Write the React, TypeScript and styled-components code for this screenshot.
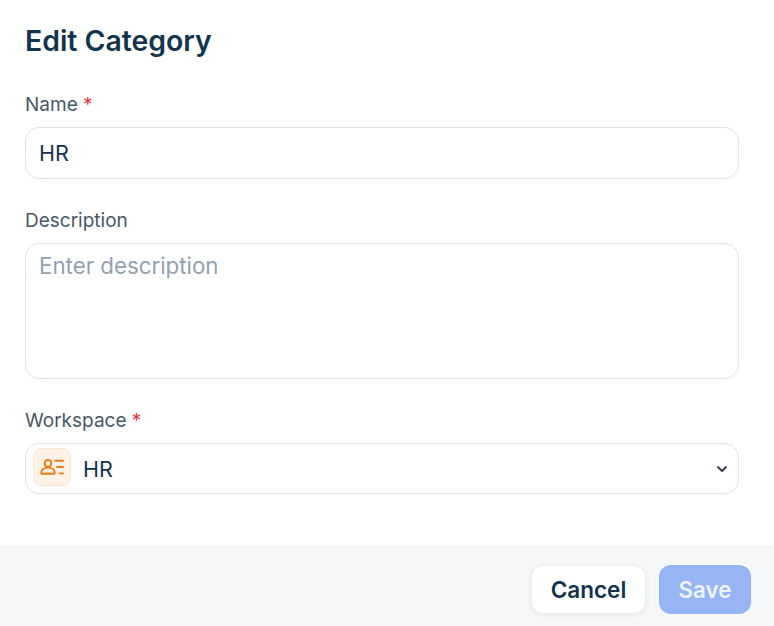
import styled, { createGlobalStyle } from 'styled-components';

const GlobalStyle = createGlobalStyle`
  html, body {
    margin: 0;
    padding: 0;
    background: #ffffff;
    font-family: Inter, "Liberation Sans", sans-serif;
  }
  * {
    box-sizing: border-box;
  }
`;

function App() {
  return (
    <>
      <GlobalStyle />
      <StModal>
        <StBody>
          <StTitle>Edit Category</StTitle>
          <StField>
            <StLabel>
              Name <StRequired>*</StRequired>
            </StLabel>
            <StInput defaultValue="HR" />
          </StField>
          <StField>
            <StLabel>Description</StLabel>
            <StTextarea placeholder="Enter description" />
          </StField>
          <StField>
            <StLabel>
              Workspace <StRequired>*</StRequired>
            </StLabel>
            <StSelect>
              <StIconBox>
                <svg width="24" height="24" viewBox="0 0 24 24" fill="none" stroke="#ef7a12" strokeWidth="1.9" strokeLinecap="round" strokeLinejoin="round">
                  <circle cx="8" cy="8.4" r="3.400" />
                  <path d="M1.200 17.800c0-3.200 3-5.200 6.800-5.200s6.800 2 6.800 5.200c0 .6-.4 1-1 1H2.200c-.6 0-1-.4-1-1z" />
                  <path d="M15.200 5.800h7.800M17 12h6M19.500 18.400h3.500" />
                </svg>
              </StIconBox>
              <StSelectValue>HR</StSelectValue>
              <StChevron width="12" height="12" viewBox="0 0 12 12" fill="none" stroke="#2f3b4a" strokeWidth="1.8" strokeLinecap="round" strokeLinejoin="round">
                <path d="M2 4l4 4 4-4" />
              </StChevron>
            </StSelect>
          </StField>
        </StBody>
        <StFooter>
          <StCancelButton>Cancel</StCancelButton>
          <StSaveButton disabled>Save</StSaveButton>
        </StFooter>
      </StModal>
    </>
  );
}

export default App;

const StModal = styled.div`
  display: flex;
  flex-direction: column;
  width: 774px;
  height: 626px;
  background-color: #ffffff;
`;

const StBody = styled.div`
  display: flex;
  flex-direction: column;
  flex: 1;
  padding: 22px 35px 0 25px;
`;

const StTitle = styled.h2`
  margin: 0 0 31px;
  color: #12344d;
  font-size: 28.4px;
  font-weight: 600;
  line-height: 38px;
`;

const StField = styled.div`
  display: flex;
  flex-direction: column;
  margin-bottom: 28px;
`;

const StLabel = styled.label`
  margin-bottom: 9px;
  color: #475867;
  font-size: 19px;
  line-height: 27px;
`;

const StRequired = styled.span`
  color: #e43538;
`;

const StInput = styled.input`
  width: 100%;
  height: 52px;
  padding: 0 13px;
  border: 1px solid #dfe3eb;
  border-radius: 14px;
  outline: none;
  color: #12344d;
  font-family: inherit;
  font-size: 21.5px;
`;

const StTextarea = styled.textarea`
  display: block;
  width: 100%;
  height: 136px;
  padding: 7px 13px;
  border: 1px solid #dfe3eb;
  border-radius: 14px;
  outline: none;
  resize: none;
  color: #12344d;
  font-family: inherit;
  font-size: 22.3px;
  line-height: 29px;

  &::placeholder {
    color: #92a2b1;
  }
`;

const StSelect = styled.div`
  display: flex;
  align-items: center;
  width: 100%;
  height: 51px;
  padding: 0 10px 0 7px;
  border: 1px solid #dfe3eb;
  border-radius: 14px;
`;

const StIconBox = styled.div`
  display: flex;
  justify-content: center;
  align-items: center;
  width: 38px;
  height: 38px;
  margin-bottom: 3px;
  border: 1px solid #fde6d3;
  border-radius: 8px;
  background-color: #fef1e6;
`;

const StSelectValue = styled.span`
  flex: 1;
  margin-left: 12px;
  color: #12344d;
  font-size: 21.5px;
`;

const StChevron = styled.svg`
  display: block;
`;

const StFooter = styled.div`
  display: flex;
  justify-content: flex-end;
  align-items: center;
  gap: 13px;
  height: 81px;
  padding: 8px 23px 0 0;
  background-color: #f5f7f9;
`;

const StCancelButton = styled.button`
  width: 115px;
  height: 49px;
  border: 1px solid #ebeff3;
  border-radius: 12px;
  background-color: #ffffff;
  box-shadow: 0 1px 4px rgba(18, 52, 77, 0.08);
  color: #12344d;
  font-family: inherit;
  font-size: 22.500px;
  font-weight: 600;
`;

const StSaveButton = styled.button`
  width: 92px;
  height: 49px;
  border: none;
  border-radius: 12px;
  background-color: #97b4f5;
  color: #eef3fe;
  font-family: inherit;
  font-size: 22.300px;
  font-weight: 600;
`;
